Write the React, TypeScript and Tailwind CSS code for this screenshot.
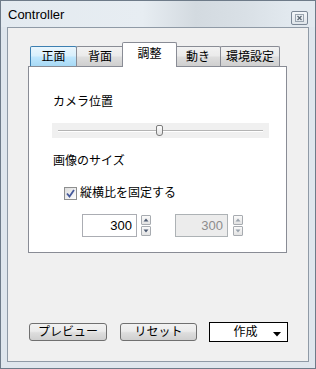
import React from "react";

const F = "font-['Liberation_Sans','Noto_Sans_CJK_JP',sans-serif]";

function Tab({ label, w, cls, selected, hover }: { label: string; w: string; cls: string; selected?: boolean; hover?: boolean }) {
  if (selected) {
    return (
      <div className={`${w} ${cls} relative z-10 h-[25px] -mb-px bg-white border border-b-0 border-[#898c95] rounded-t-[2px] flex items-center justify-center text-[12px] text-black pb-[3px]`}>
        {label}
      </div>
    );
  }
  const bg = hover
    ? "bg-[linear-gradient(180deg,#eaf6fd_0%,#d9f0fc_45%,#bee6fd_55%,#a7d9f5_100%)] border-[#3c7fb1]"
    : "bg-[linear-gradient(180deg,#f2f2f2_0%,#ebebeb_45%,#dddddd_55%,#cfcfcf_100%)] border-[#898c95]";
  return (
    <div className={`${w} ${cls} h-[20px] border border-b-0 ${bg} rounded-t-[2px] flex items-center justify-center text-[12px] text-black`}>
      {label}
    </div>
  );
}

function Spinner({ disabled }: { disabled?: boolean }) {
  const c = disabled ? "#9aa3ad" : "#4d5b72";
  const box = "w-[10px] h-[10px] border border-[#a7abb0] rounded-[1px] bg-[linear-gradient(180deg,#fafafa,#e3e3e3)] flex items-center justify-center";
  return (
    <div className="flex flex-col gap-px">
      <div className={box}>
        <svg width="6" height="4" viewBox="0 0 6 4"><path d="M3 0.5 L5.5 3.5 L0.5 3.5 Z" fill={c} /></svg>
      </div>
      <div className={box}>
        <svg width="6" height="4" viewBox="0 0 6 4"><path d="M0.5 0.5 L5.5 0.5 L3 3.5 Z" fill={c} /></svg>
      </div>
    </div>
  );
}

export default function App() {
  return (
    <div className={`w-[316px] h-[369px] bg-[#dfe6ed] border border-[#6e7b89] flex flex-col ${F}`}>
      <div className="h-[26px] shrink-0 flex items-center justify-between pl-[7px] pr-[7px] bg-[linear-gradient(90deg,#e3eaf0_0%,#e7edf2_45%,#d3dae0_62%,#d9e0e6_78%,#e2e9ef_92%)]">
        <span className="text-[13px] text-black font-['Liberation_Sans',sans-serif] leading-none mt-[1px]">Controller</span>
        <div className="w-[17px] h-[14px] mt-[7px] border border-[#7c8896] rounded-[2px] bg-[linear-gradient(180deg,#f3f6f9,#dfe5ea)] flex items-center justify-center">
          <svg width="9" height="8" viewBox="0 0 9 8">
            <rect x="0.5" y="0.5" width="8" height="7" fill="none" stroke="#9aa5b0" strokeWidth="1" />
            <path d="M2.5 2 L6.5 6 M6.5 2 L2.5 6" stroke="#5d6975" strokeWidth="1.2" />
          </svg>
        </div>
      </div>
      <div className="mx-[6px] mb-[6px] flex-1 border border-[#8f9aa6] bg-[#f0f0f0] flex flex-col">
        <div className="pl-[20px] pt-[13px]">
          <div className="flex items-end pl-[2px] h-[25px]">
            <Tab label="正面" w="w-[47px]" cls="" hover />
            <Tab label="背面" w="w-[48px]" cls="-ml-px" />
            <Tab label="調整" w="w-[55px]" cls="-ml-[2px]" selected />
            <Tab label="動き" w="w-[46px]" cls="-ml-[2px]" />
            <Tab label="環境設定" w="w-[60px]" cls="-ml-px" />
          </div>
          <div className="w-[259px] h-[187px] bg-white border border-[#898c95] pl-[24px] pt-[27px] text-[12px] text-black">
            <div className="leading-[16px]">カメラ位置</div>
            <div className="mt-[13px] -ml-px w-[217px] h-[15px] bg-[#f0f0f0] flex items-center px-[6px] relative">
              <div className="w-full h-[2px] border-t border-[#b4b4b4] border-b-[#ffffff] border-b bg-transparent" />
              <div className="absolute left-[104px] top-[2px] w-[7px] h-[11px] border border-[#7d7d7d] rounded-[2px] rounded-b-[3px] bg-[linear-gradient(180deg,#fdfdfd,#e2e2e2)]" />
            </div>
            <div className="mt-[15px] leading-[16px]">画像のサイズ</div>
            <div className="mt-[16px] ml-[11px] flex items-center h-[16px]">
              <div className="w-[13px] h-[13px] border border-[#8e8f8f] bg-[linear-gradient(135deg,#dcdcdc,#ffffff)] flex items-center justify-center">
                <svg width="9" height="9" viewBox="0 0 9 9">
                  <path d="M1 4.5 L3.5 7.5 L8 1" fill="none" stroke="#45599b" strokeWidth="1.8" />
                </svg>
              </div>
              <span className="ml-[3px] leading-[16px]">縦横比を固定する</span>
            </div>
            <div className="mt-[13px] ml-[29px] flex items-center">
              <div className="w-[55px] h-[23px] border border-[#abadb3] bg-white flex items-center justify-end pr-[4px] text-[13px] text-black">300</div>
              <div className="ml-[4px]"><Spinner /></div>
              <div className="ml-[24px] w-[53px] h-[23px] border border-[#adb2b5] bg-[#ececec] flex items-center justify-end pr-[4px] text-[13px] text-[#8d8d8d]">300</div>
              <div className="ml-[5px]"><Spinner disabled /></div>
            </div>
          </div>
        </div>
        <div className="mt-auto pl-[21px] pb-[19px] flex items-center text-[12px] text-black">
          <div className="w-[78px] h-[18px] border border-[#707070] rounded-[3px] bg-[linear-gradient(180deg,#f2f2f2_0%,#ebebeb_45%,#dddddd_55%,#cfcfcf_100%)] flex items-center justify-center">プレビュー</div>
          <div className="ml-[13px] w-[77px] h-[18px] border border-[#707070] rounded-[3px] bg-[linear-gradient(180deg,#f2f2f2_0%,#ebebeb_45%,#dddddd_55%,#cfcfcf_100%)] flex items-center justify-center">リセット</div>
          <div className="ml-[12px] w-[79px] h-[20px] border border-black bg-white flex items-center justify-center relative pr-[6px]">
            作成
            <svg className="absolute right-[6px] bottom-[4px]" width="8" height="5" viewBox="0 0 8 5"><path d="M0 0 L8 0 L4 4.5 Z" fill="#000" /></svg>
          </div>
        </div>
      </div>
    </div>
  );
}
